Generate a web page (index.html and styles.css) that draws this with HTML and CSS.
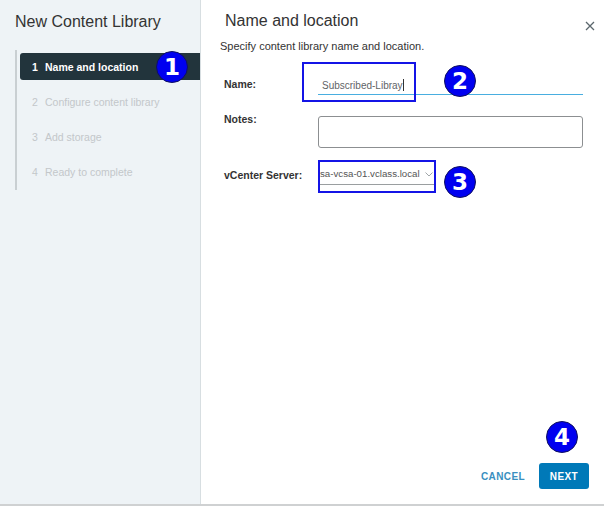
FILE: index.html
```html
<!DOCTYPE html>
<html>
<head>
<meta charset="utf-8">
<link rel="stylesheet" href="styles.css">
</head>
<body>
<div class="wizard">
  <aside class="sidebar">
    <h1 class="wiz-title">New Content Library</h1>
    <ol class="steps">
      <li class="step active"><span class="num">1</span>Name and location</li>
      <li class="step"><span class="num">2</span>Configure content library</li>
      <li class="step"><span class="num">3</span>Add storage</li>
      <li class="step"><span class="num">4</span>Ready to complete</li>
    </ol>
    <span class="badge badge-1">1</span>
  </aside>
  <main class="content">
    <div class="head">
      <h2 class="page-title">Name and location</h2>
      <svg class="close" width="10" height="10" viewBox="0 0 10 10"><path d="M1 1L9 9M9 1L1 9" stroke="#5b676d" stroke-width="1.3"/></svg>
    </div>
    <p class="desc">Specify content library name and location.</p>
    <div class="form">
      <div class="row row-name">
        <label class="lbl">Name:</label>
        <div class="field input-line">Subscribed-Libray<span class="caret"></span></div>
        <span class="anno anno-2"></span>
        <span class="badge badge-2">2</span>
      </div>
      <div class="row row-notes">
        <label class="lbl">Notes:</label>
        <div class="field textarea"></div>
      </div>
      <div class="row row-vc">
        <label class="lbl">vCenter Server:</label>
        <div class="select"><span>sa-vcsa-01.vclass.local</span>
          <svg class="chev" width="8" height="5" viewBox="0 0 8 5"><path d="M0.5 0.5L4 4L7.5 0.5" fill="none" stroke="#a0a6a9" stroke-width="1"/></svg>
        </div>
        <span class="anno anno-3"></span>
        <span class="badge badge-3">3</span>
      </div>
    </div>
    <div class="footer">
      <button class="btn btn-link">CANCEL</button>
      <button class="btn btn-primary">NEXT</button>
      <span class="badge badge-4">4</span>
    </div>
  </main>
</div>
</body>
</html>
```

FILE: styles.css
```css
* { box-sizing: border-box; }
html, body { margin: 0; padding: 0; background: #fff; }
body { font-family: "Liberation Sans", Arial, sans-serif; color: #333; width: 604px; height: 506px; overflow: hidden; }

.wizard {
  display: flex;
  height: 506px;
  border-bottom: 2px solid #cfd1d2;
}

.sidebar {
  position: relative;
  width: 201px;
  flex: none;
  background: #eef3f6;
  border-right: 1px solid #d7dee1;
  padding: 11px 0 0 15px;
}
.wiz-title {
  margin: 0;
  font-size: 16px;
  font-weight: normal;
  color: #333;
  line-height: 22px;
}
.steps {
  list-style: none;
  margin: 17px 0 0 0;
  padding: 4px 0 5px 3px;
  border-left: 2px solid #c9cfd2;
}
.step {
  height: 27px;
  margin-bottom: 8px;
  display: flex;
  align-items: center;
  padding-left: 12px;
  font-size: 10.5px;
  color: #c3c7ca;
}
.step:last-child { margin-bottom: 0; }
.step .num { width: 13px; }
.step.active {
  background: #22343c;
  color: #fff;
  font-weight: bold;
  border-radius: 3px 0 0 3px;
  margin-top: -1px;
}

.badge {
  position: absolute;
  width: 32px;
  height: 32px;
  border-radius: 50%;
  background: #0000f0;
  border: 1px solid #101060;
  color: #fff;
  font-family: "DejaVu Sans", sans-serif;
  font-weight: bold;
  font-size: 23px;
  line-height: 30px;
  text-align: center;
}
.badge-1 { left: 156px; top: 51px; }

.content {
  flex: 1;
  display: flex;
  flex-direction: column;
  padding: 10px 21px 0 23px;
}
.head {
  display: flex;
  justify-content: space-between;
  align-items: flex-start;
}
.page-title {
  margin: 0;
  font-size: 16px;
  font-weight: normal;
  line-height: 22px;
  color: #333;
  padding-left: 1px;
}
.close { margin-top: 11px; margin-right: -12px; }
.desc {
  margin: 7px 0 0 -4px;
  font-size: 11px;
  line-height: 14px;
  color: #333;
}

.form { margin-top: 13px; }
.row {
  position: relative;
  display: flex;
  align-items: flex-start;
}
.lbl {
  width: 94px;
  flex: none;
  font-size: 10.5px;
  font-weight: bold;
  color: #333;
}
.row-name { height: 30px; }
.row-name .lbl { margin-top: 12px; }
.input-line {
  flex: 1;
  margin-top: 9px;
  height: 20px;
  padding: 4px 0 0 4px;
  font-size: 10px;
  color: #5f6467;
  border-bottom: 1.5px solid #49aee0;
}
.caret {
  display: inline-block;
  width: 1px;
  height: 12px;
  background: #333;
  vertical-align: -2px;
}
.anno {
  position: absolute;
  border: 2px solid #1414e6;
}
.anno-2 { left: 78px; top: -4px; width: 114px; height: 40px; }
.badge-2 { left: 220px; top: -1px; }

.row-notes { margin-top: 20px; height: 32px; }
.row-notes .lbl { margin-top: -3px; }
.textarea {
  flex: 1;
  height: 32px;
  border: 1px solid #8c8f91;
  border-radius: 3px;
}

.row-vc { margin-top: 12px; height: 33px; }
.row-vc .lbl { margin-top: 9px; }
.select {
  margin-left: 0;
  margin-top: 5px;
  width: 116px;
  height: 20px;
  padding: 3px 0 0 2px;
  font-size: 9.7px;
  color: #555;
  border-bottom: 1px solid #9a9ea0;
  display: flex;
  align-items: flex-start;
  white-space: nowrap;
}
.chev { margin-left: 5px; margin-top: 4px; flex: none; }
.anno-3 { left: 94px; top: 0; width: 118px; height: 33px; }
.badge-3 { left: 220px; top: 6px; }

.footer {
  position: relative;
  margin-top: auto;
  margin-bottom: 15px;
  display: flex;
  justify-content: flex-end;
  align-items: center;
  gap: 14px;
}
.btn {
  font-family: "Liberation Sans", Arial, sans-serif;
  font-size: 10px;
  font-weight: bold;
  letter-spacing: 0.4px;
  border: none;
  border-radius: 3px;
  height: 26px;
  cursor: pointer;
}
.btn-link { background: transparent; color: #3a8fc0; padding: 0; }
.btn-primary { background: #0079b8; color: #fff; width: 50px; padding: 0; margin-right: -6px; }
.badge-4 { right: 5px; top: -42px; }
```
